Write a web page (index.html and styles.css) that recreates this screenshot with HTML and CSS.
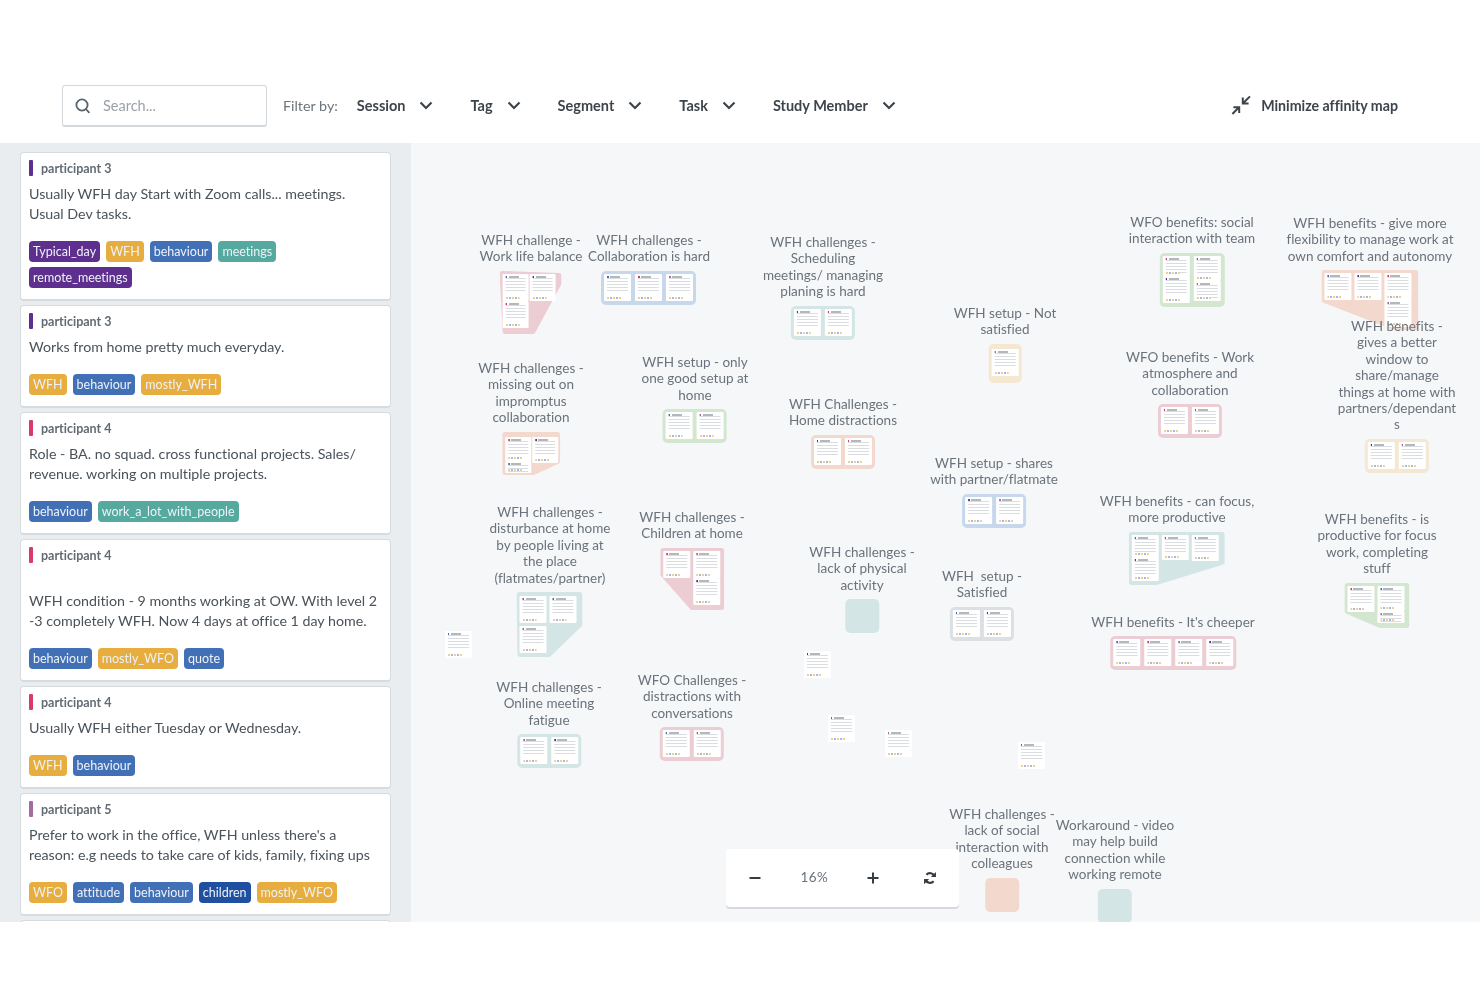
FILE: index.html
```html
<!DOCTYPE html>
<html lang="en">
<head>
<meta charset="utf-8">
<title>Affinity map</title>
<link rel="stylesheet" href="styles.css">
</head>
<body>
<header class="toolbar">
  <label class="search">
    <svg class="search-icon" viewBox="0 0 16 16" width="16" height="16"><circle cx="7" cy="7" r="5.6"/><path d="M10.8 11l3.6 3.8"/></svg>
    <span>Search...</span>
  </label>
  <span class="filter-label">Filter by:</span>
  <button class="filter">Session<svg viewBox="0 0 14 9" width="14" height="9"><path d="M1.5 1.5L7 7l5.5-5.5"/></svg></button>
  <button class="filter">Tag<svg viewBox="0 0 14 9" width="14" height="9"><path d="M1.5 1.5L7 7l5.5-5.5"/></svg></button>
  <button class="filter">Segment<svg viewBox="0 0 14 9" width="14" height="9"><path d="M1.5 1.5L7 7l5.5-5.5"/></svg></button>
  <button class="filter">Task<svg viewBox="0 0 14 9" width="14" height="9"><path d="M1.5 1.5L7 7l5.5-5.5"/></svg></button>
  <button class="filter">Study Member<svg viewBox="0 0 14 9" width="14" height="9"><path d="M1.5 1.5L7 7l5.5-5.5"/></svg></button>
  <button class="minimize">
    <svg viewBox="0 0 20 20" width="20" height="20"><path d="M12 8.2L19 1.400M11.800 2.600v5.800h5.800M8 12.200L1.400 19M2.400 12.200h5.800v5.800"/></svg>
    Minimize affinity map
  </button>
</header>

<main class="workspace">
  <aside class="sidebar">
    <article class="card">
      <h3 class="who"><i class="bar purple"></i>participant 3</h3>
      <p>Usually WFH day Start with Zoom calls... meetings.<br>Usual Dev tasks.</p>
      <div class="tags"><span class="tag purple">Typical_day</span><span class="tag orange">WFH</span><span class="tag blue">behaviour</span><span class="tag teal">meetings</span><span class="tag purple">remote_meetings</span></div>
    </article>
    <article class="card">
      <h3 class="who"><i class="bar purple"></i>participant 3</h3>
      <p>Works from home pretty much everyday.</p>
      <div class="tags"><span class="tag orange">WFH</span><span class="tag blue">behaviour</span><span class="tag orange">mostly_WFH</span></div>
    </article>
    <article class="card">
      <h3 class="who"><i class="bar pink"></i>participant 4</h3>
      <p>Role - BA. no squad. cross functional projects. Sales/<br>revenue. working on multiple projects.</p>
      <div class="tags"><span class="tag blue">behaviour</span><span class="tag teal">work_a_lot_with_people</span></div>
    </article>
    <article class="card">
      <h3 class="who"><i class="bar pink"></i>participant 4</h3>
      <p><br>WFH condition - 9 months working at OW. With level 2<br>-3 completely WFH. Now 4 days at office 1 day home.</p>
      <div class="tags"><span class="tag blue">behaviour</span><span class="tag orange">mostly_WFO</span><span class="tag blue">quote</span></div>
    </article>
    <article class="card">
      <h3 class="who"><i class="bar pink"></i>participant 4</h3>
      <p>Usually WFH either Tuesday or Wednesday.</p>
      <div class="tags"><span class="tag orange">WFH</span><span class="tag blue">behaviour</span></div>
    </article>
    <article class="card">
      <h3 class="who"><i class="bar mauve"></i>participant 5</h3>
      <p>Prefer to work in the office, WFH unless there's a<br>reason: e.g needs to take care of kids, family, fixing ups</p>
      <div class="tags"><span class="tag orange">WFO</span><span class="tag blue">attitude</span><span class="tag blue">behaviour</span><span class="tag navy">children</span><span class="tag orange">mostly_WFO</span></div>
    </article>
    <article class="card"></article>
  </aside>

  <section class="canvas">
    <div class="node n1"><div class="label">WFH challenge -<br>Work life balance</div>
      <div class="cl poly s1 k-pink"><svg viewBox="0 0 62 63" width="62" height="63"><polygon points="3,3 59,5 59,12 33,60 6,60"/></svg><div class="col"><b class="note a"></b><b class="note c"></b></div><div class="col"><b class="note b"></b></div></div></div>
    <div class="node n2"><div class="label">WFH challenges -<br>Collaboration is hard</div>
      <div class="cl k-blue"><b class="note a"></b><b class="note c"></b><b class="note d"></b></div></div>
    <div class="node n3"><div class="label">WFH challenges -<br>Scheduling<br>meetings/ managing<br>planing is hard</div>
      <div class="cl k-teal"><b class="note b"></b><b class="note c"></b></div></div>
    <div class="node n4"><div class="label">WFH setup - Not<br>satisfied</div>
      <div class="cl tall k-cream"><b class="note d"></b></div></div>
    <div class="node n5"><div class="label">WFO benefits: social<br>interaction with team</div>
      <div class="cl s5 k-green"><div class="col"><b class="note c h20"></b><b class="note b"></b></div><div class="col"><b class="note a h25"></b><b class="note d h20"></b></div></div></div>
    <div class="node n6"><div class="label">WFH benefits - give more<br>flexibility to manage work at<br>own comfort and autonomy</div>
      <div class="cl poly s6 k-peach"><svg viewBox="0 0 97 60" width="97" height="60"><polygon points="3,3 94,3 94,57 73,57 3,30"/></svg><div class="col"><b class="note a"></b></div><div class="col"><b class="note b"></b></div><div class="col"><b class="note c"></b><b class="note d"></b></div></div></div>
    <div class="node n8"><div class="label">WFH challenges -<br>missing out on<br>impromptus<br>collaboration</div>
      <div class="cl poly s8 k-peach"><svg viewBox="0 0 58 43" width="58" height="43"><polygon points="3,3 55,3 55,29 31,40 3,40"/></svg><div class="col"><b class="note c h24"></b><b class="note a h12"></b></div><div class="col"><b class="note b h26"></b></div></div></div>
    <div class="node n9"><div class="label">WFH setup - only<br>one good setup at<br>home</div>
      <div class="cl k-green"><b class="note a"></b><b class="note d"></b></div></div>
    <div class="node n10"><div class="label">WFH Challenges -<br>Home distractions</div>
      <div class="cl k-peach"><b class="note b"></b><b class="note c"></b></div></div>
    <div class="node n11"><div class="label">WFO benefits - Work<br>atmosphere and<br>collaboration</div>
      <div class="cl k-pink"><b class="note c"></b><b class="note a"></b></div></div>
    <div class="node n12"><div class="label">WFH setup - shares<br>with partner/flatmate</div>
      <div class="cl k-blue"><b class="note b"></b><b class="note d"></b></div></div>
    <div class="node n13"><div class="label">WFH challenges -<br>disturbance at home<br>by people living at<br>the place<br>(flatmates/partner)</div>
      <div class="cl poly s13 k-teal"><svg viewBox="0 0 66 65" width="66" height="65"><polygon points="3,3 63,3 63,32 32,62 4,62"/></svg><div class="col gap"><b class="note c"></b><b class="note d"></b></div><div class="col"><b class="note a"></b></div></div></div>
    <div class="node n14"><div class="label">WFH challenges -<br>Children at home</div>
      <div class="cl poly s14 k-pink"><svg viewBox="0 0 64 62" width="64" height="62"><polygon points="3,3 61,3 61,59 32,59 3,26"/></svg><div class="col"><b class="note c"></b></div><div class="col"><b class="note d"></b><b class="note b"></b></div></div></div>
    <div class="node n15"><div class="label">WFH benefits - can focus,<br>more productive</div>
      <div class="cl poly s15 k-teal"><svg viewBox="0 0 96 53" width="96" height="53"><polygon points="3,3 93,3 93,30 28,50 3,50"/></svg><div class="col"><b class="note a h22"></b><b class="note b h24"></b></div><div class="col"><b class="note c h25"></b></div><div class="col"><b class="note d h26"></b></div></div></div>
    <div class="node n16"><div class="label">WFH benefits - is<br>productive for focus<br>work, completing<br>stuff</div>
      <div class="cl poly s16 k-green"><svg viewBox="0 0 65 45" width="65" height="45"><polygon points="3,3 62,3 62,42 36,42 3,28"/></svg><div class="col"><b class="note c h26"></b></div><div class="col"><b class="note a h25"></b><b class="note d h12"></b></div></div></div>
    <div class="node n17"><div class="label">WFH challenges -<br>lack of physical<br>activity</div><div class="cl empty k-teal"></div></div>
    <div class="node n18"><div class="label">WFH &nbsp;setup -<br>Satisfied</div>
      <div class="cl k-grey"><b class="note a"></b><b class="note b"></b></div></div>
    <div class="node n19"><div class="label">WFH benefits - It's cheeper</div>
      <div class="cl k-pink"><b class="note a"></b><b class="note c"></b><b class="note d"></b><b class="note b"></b></div></div>
    <div class="node n20"><div class="label">WFH challenges -<br>Online meeting<br>fatigue</div>
      <div class="cl k-teal"><b class="note d"></b><b class="note b"></b></div></div>
    <div class="node n21"><div class="label">WFO Challenges -<br>distractions with<br>conversations</div>
      <div class="cl k-pink"><b class="note a"></b><b class="note c"></b></div></div>
    <div class="node n22"><div class="label">WFH challenges -<br>lack of social<br>interaction with<br>colleagues</div><div class="cl empty k-peach"></div></div>
    <div class="node n23"><div class="label">Workaround - video<br>may help build<br>connection while<br>working remote</div><div class="cl empty k-teal"></div></div>
    <div class="node n7"><div class="label">WFH benefits -<br>gives a better<br>window to<br>share/manage<br>things at home with<br>partners/dependant<br>s</div>
      <div class="cl k-cream"><b class="note b"></b><b class="note d"></b></div></div>

    <b class="note loose l1 a"></b>
    <b class="note loose l2 b"></b>
    <b class="note loose l3 c"></b>
    <b class="note loose l4 d"></b>
    <b class="note loose l5 a"></b>

    <div class="zoom">
      <button class="zoom-btn"><svg viewBox="0 0 12 12" width="12" height="12"><path d="M.5 6h11"/></svg></button>
      <span class="zoom-value">16%</span>
      <button class="zoom-btn"><svg viewBox="0 0 12 12" width="12" height="12"><path d="M.5 6h11M6 .5v11"/></svg></button>
      <button class="zoom-btn"><svg class="sync" viewBox="0 0 16 16" width="14" height="14"><path d="M13.100 6.200A5.400 5.400 0 0 0 3.900 4.300M2.900 9.800a5.400 5.400 0 0 0 9.200 1.900"/><path class="tip" d="M14.800 1v5.800H9zM1.200 15V9.200H7z"/></svg></button>
    </div>
  </section>
</main>
</body>
</html>
```

FILE: styles.css
```css
* { box-sizing: border-box; }
html, body { margin: 0; height: 100%; background: #fff; }
body { font-family: "Lato", "Open Sans", sans-serif; font-variant-ligatures: none; color: #4a525a; overflow: hidden; filter: blur(.35px); }
button { font: inherit; font-variant-ligatures: none; color: inherit; background: none; border: 0; padding: 0; }

/* toolbar */
.toolbar { height: 143px; padding: 85px 82px 16px 62px; display: flex; align-items: center; }
.search { width: 205px; height: 42px; display: flex; align-items: center; gap: 12px; padding-left: 12px; border: 1px solid #d3d8dd; border-bottom-width: 2px; border-radius: 3px; color: #9aa1a8; font-size: 14.5px; }
.search-icon { fill: none; stroke: #59626b; stroke-width: 1.8; flex: none; }
.filter-label { margin-left: 16px; margin-right: 19px; padding-bottom: 1px; font-size: 14.3px; color: #6c747c; }
.filter { display: flex; align-items: center; gap: 14px; margin-right: 37px; padding-bottom: 2px; font-size: 14.5px; font-weight: 700; color: #3d444b; }
.filter svg { fill: none; stroke: #3d444b; stroke-width: 2.2; }
.minimize { margin-left: auto; display: flex; align-items: center; gap: 10px; padding-bottom: 2px; font-size: 14.2px; font-weight: 700; color: #3d444b; }
.minimize svg { fill: none; stroke: #3d444b; stroke-width: 2; }

/* layout */
.workspace { height: 779px; display: flex; overflow: hidden; }
.sidebar { flex: none; width: 411px; background: #e9edf0; padding: 9px 20px 0; display: flex; flex-direction: column; gap: 4px; overflow: hidden; }

/* cards */
.card { flex: none; min-height: 40px; background: #fff; border: 1px solid #d6dbe0; border-bottom-width: 2px; border-radius: 4px; padding: 7px 8px 11px; }
.who { margin: 0; height: 16px; display: flex; align-items: center; gap: 8px; font-size: 12.5px; font-weight: 700; color: #626b73; }
.bar { width: 4px; height: 16px; border-radius: 1px; }
.card p { margin: 8px 0 17px; font-size: 14.25px; line-height: 20px; color: #4a525a; }
.tags { display: flex; flex-wrap: wrap; gap: 5px 6px; }
.tag { height: 21px; padding: 0 4px; border-radius: 4px; font-size: 12.5px; line-height: 21px; color: #eef2f6; }
.bar.purple, .tag.purple { background: #5e2f8e; }
.bar.pink { background: #d93a6b; }
.bar.mauve { background: #a46aa3; }
.tag.orange { background: #e7ad3e; }
.tag.blue { background: #4270b7; }
.tag.teal { background: #55a99e; }
.tag.navy { background: #1f4fa0; }

/* canvas */
.canvas { position: relative; flex: 1; background: #f6f7f9; overflow: hidden; }
.node { position: absolute; display: flex; flex-direction: column; align-items: center; gap: 6px; transform: translateX(-50%); }
.label { font-size: 13.5px; line-height: 16.4px; color: #6a737b; text-align: center; white-space: nowrap; }
.cl { --c: #ccc; display: flex; flex-wrap: nowrap; align-items: flex-start; gap: 4px; padding: 3px 3px 4px; border-radius: 5px; background: var(--c); }
.k-pink { --c: #eccdd3; }
.k-blue { --c: #c7d7ec; }
.k-teal { --c: #d3e6e5; }
.k-cream { --c: #f4e8d2; }
.k-green { --c: #d2e6d0; }
.k-peach { --c: #f3d8cd; }
.k-grey { --c: #dbe0e4; }
.tall { height: 39px; padding-top: 5px; }
.empty { width: 34px; height: 34px; }
.col { display: flex; flex-direction: column; flex: none; }
.col.gap { gap: 3px; }

.poly { position: relative; background: none; padding: 3px 3px 0; gap: 3px; }
.poly svg { position: absolute; left: 0; top: 0; }
.poly polygon { fill: var(--c); stroke: var(--c); stroke-width: 6; stroke-linejoin: round; }
.poly .col { position: relative; }
.s1 { width: 62px; height: 63px; gap: 1px; }
.s1 .note, .s8 .note { width: 26px; }
.s5 { width: 65px; height: 54px; }
.s6 { width: 97px; height: 60px; }
.s8 { width: 58px; height: 43px; padding-top: 5px; gap: 1px; }
.s13 { width: 66px; height: 65px; padding-top: 4px; }
.s14 { width: 64px; height: 62px; }
.s15 { width: 96px; height: 53px; }
.s16 { width: 65px; height: 45px; }

/* miniature notes */
.note { --bar: #4270b7; position: relative; display: block; flex: none; width: 27px; height: 27px; overflow: hidden; border-radius: 1px; background: #fff; filter: blur(.25px); }
.note::before { content: ""; position: absolute; left: 3px; right: 3px; top: 2px; height: 16px; background: linear-gradient(90deg, var(--bar) 1.5px, #fff 1.5px 3px, #b4b8bd 3px 13px, #fff 13px) 0 0 / 100% 2px no-repeat, repeating-linear-gradient(#fff 0 2px, #dadde0 2px 3px); }
.note::after { content: ""; position: absolute; left: 3px; bottom: 2px; width: 14px; height: 2px; background: repeating-linear-gradient(90deg, #f0cf92 0 2px, #fff 2px 3px, #a3bbe2 3px 5px, #fff 5px 6px); }
.note.a { --bar: #4270b7; }
.note.b { --bar: #5e2f8e; }
.note.c { --bar: #d93a6b; }
.note.d { --bar: #a46aa3; }
.note.h12 { height: 12px; }
.note.h20 { height: 20px; }
.note.h22 { height: 22px; }
.note.h24 { height: 24px; }
.note.h25 { height: 25px; }
.note.h26 { height: 26px; }
.loose { position: absolute; }
.l1 { left: 34px; top: 488px; }
.l2 { left: 393px; top: 508px; }
.l3 { left: 417px; top: 572px; }
.l4 { left: 474px; top: 587px; }
.l5 { left: 607px; top: 599px; }

/* node positions, relative to the canvas */
.n1 { left: 120px; top: 89px; }
.n2 { left: 238px; top: 89px; }
.n3 { left: 412px; top: 91px; }
.n4 { left: 594px; top: 162px; }
.n5 { left: 781px; top: 71px; }
.n6 { left: 959px; top: 72px; }
.n7 { left: 986px; top: 175px; }
.n8 { left: 120px; top: 217px; }
.n9 { left: 284px; top: 211px; }
.n10 { left: 432px; top: 253px; }
.n11 { left: 779px; top: 206px; }
.n12 { left: 583px; top: 312px; }
.n13 { left: 139px; top: 361px; }
.n14 { left: 281px; top: 366px; }
.n15 { left: 766px; top: 350px; }
.n16 { left: 966px; top: 368px; }
.n17 { left: 451px; top: 401px; }
.n18 { left: 571px; top: 425px; }
.n19 { left: 762px; top: 471px; }
.n20 { left: 138px; top: 536px; }
.n21 { left: 281px; top: 529px; }
.n22 { left: 591px; top: 663px; }
.n23 { left: 704px; top: 674px; }

/* zoom control */
.zoom { position: absolute; left: 315px; top: 706px; z-index: 5; width: 233px; height: 58px; display: grid; grid-template-columns: repeat(4, 1fr); align-items: center; justify-items: center; background: #fff; border-radius: 4px; box-shadow: 0 2px 0 #d6d9e0; }
.zoom-btn { display: flex; }
.zoom-btn:nth-child(3) { margin-left: 2px; }
.zoom-btn svg { fill: none; stroke: #363c43; stroke-width: 2; }
.zoom-btn .sync { stroke-width: 2.5; }
.zoom-btn .sync .tip { fill: #363c43; stroke: none; }
.zoom-value { font-size: 13.5px; color: #6a737b; letter-spacing: .4px; padding: 0 0 2px 2px; }
```
